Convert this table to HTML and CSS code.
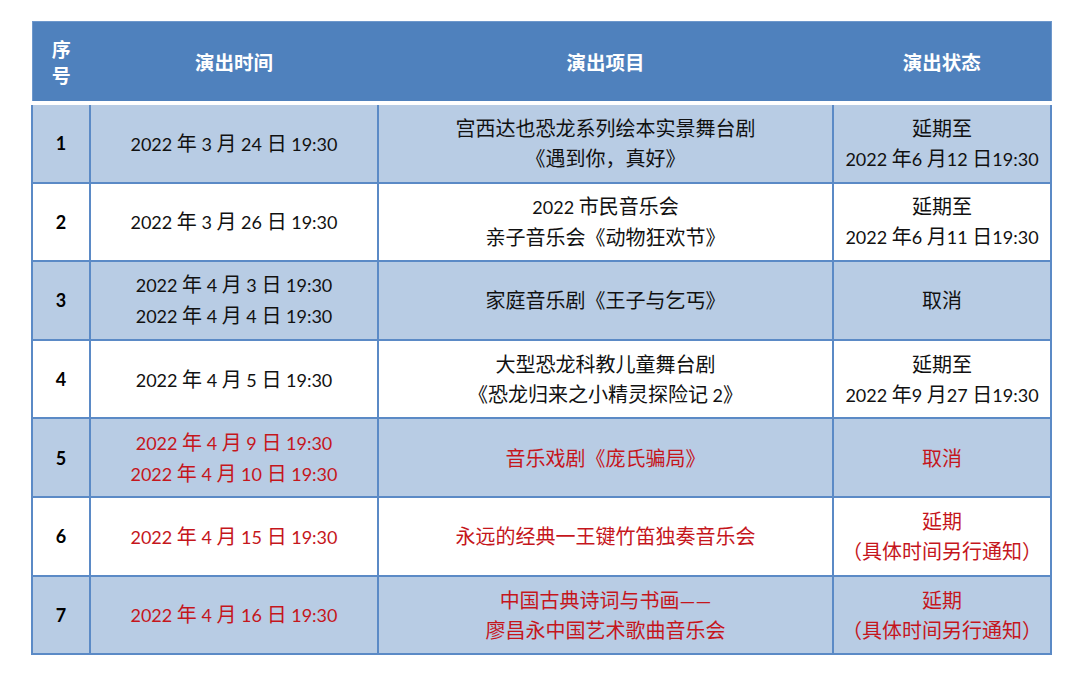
FILE: index.html
```html
<!DOCTYPE html>
<html lang="zh">
<head>
<meta charset="utf-8">
<link rel="stylesheet" href="styles.css">
</head>
<body>
<table class="sched">
  <colgroup>
    <col class="c-no">
    <col class="c-time">
    <col class="c-item">
    <col class="c-state">
  </colgroup>
  <thead>
    <tr class="head">
      <th class="hno">序<br>号</th>
      <th>演出时间</th>
      <th>演出项目</th>
      <th>演出状态</th>
    </tr>
  </thead>
  <tbody>
    <tr class="alt">
      <td class="no">1</td>
      <td><span class="n">2022 </span>年<span class="n"> 3 </span>月<span class="n"> 24 </span>日<span class="n"> 19:30</span></td>
      <td>宫西达也恐龙系列绘本实景舞台剧<br>《遇到你，真好》</td>
      <td>延期至<br><span class="n">2022 </span>年<span class="n">6 </span>月<span class="n">12 </span>日<span class="n">19:30</span></td>
    </tr>
    <tr>
      <td class="no">2</td>
      <td><span class="n">2022 </span>年<span class="n"> 3 </span>月<span class="n"> 26 </span>日<span class="n"> 19:30</span></td>
      <td><span class="n">2022 </span>市民音乐会<br>亲子音乐会《动物狂欢节》</td>
      <td>延期至<br><span class="n">2022 </span>年<span class="n">6 </span>月<span class="n">11 </span>日<span class="n">19:30</span></td>
    </tr>
    <tr class="alt">
      <td class="no">3</td>
      <td><span class="n">2022 </span>年<span class="n"> 4 </span>月<span class="n"> 3 </span>日<span class="n"> 19:30</span><br><span class="n">2022 </span>年<span class="n"> 4 </span>月<span class="n"> 4 </span>日<span class="n"> 19:30</span></td>
      <td>家庭音乐剧《王子与乞丐》</td>
      <td>取消</td>
    </tr>
    <tr>
      <td class="no">4</td>
      <td><span class="n">2022 </span>年<span class="n"> 4 </span>月<span class="n"> 5 </span>日<span class="n"> 19:30</span></td>
      <td>大型恐龙科教儿童舞台剧<br>《恐龙归来之小精灵探险记<span class="n"> 2</span>》</td>
      <td>延期至<br><span class="n">2022 </span>年<span class="n">9 </span>月<span class="n">27 </span>日<span class="n">19:30</span></td>
    </tr>
    <tr class="alt red">
      <td class="no">5</td>
      <td><span class="n">2022 </span>年<span class="n"> 4 </span>月<span class="n"> 9 </span>日<span class="n"> 19:30</span><br><span class="n">2022 </span>年<span class="n"> 4 </span>月<span class="n"> 10 </span>日<span class="n"> 19:30</span></td>
      <td>音乐戏剧《庞氏骗局》</td>
      <td>取消</td>
    </tr>
    <tr class="red">
      <td class="no">6</td>
      <td><span class="n">2022 </span>年<span class="n"> 4 </span>月<span class="n"> 15 </span>日<span class="n"> 19:30</span></td>
      <td>永远的经典一王键竹笛独奏音乐会</td>
      <td>延期<br>（具体时间另行通知）</td>
    </tr>
    <tr class="alt red">
      <td class="no">7</td>
      <td><span class="n">2022 </span>年<span class="n"> 4 </span>月<span class="n"> 16 </span>日<span class="n"> 19:30</span></td>
      <td>中国古典诗词与书画——<br>廖昌永中国艺术歌曲音乐会</td>
      <td>延期<br>（具体时间另行通知）</td>
    </tr>
  </tbody>
</table>
</body>
</html>
```

FILE: styles.css
```css
html, body {
  margin: 0;
  padding: 0;
  background: #ffffff;
}

body {
  padding: 21px 0 0 31px;
  font-family: Lato, "Noto Sans CJK SC", sans-serif;
}

.sched {
  border-collapse: collapse;
  table-layout: fixed;
  width: 1019px;
}

.c-no { width: 58px; }
.c-time { width: 288px; }
.c-item { width: 455px; }
.c-state { width: 218px; }

.head th {
  background: #4f81bd;
  color: #ffffff;
  font-family: "Noto Sans CJK SC", sans-serif;
  font-weight: 700;
  font-size: 19.5px;
  line-height: 26px;
  height: 79px;
  padding: 0;
  border-top: 1px solid #6e98cc;
  border-bottom: 4px solid #ffffff;
  text-align: center;
  vertical-align: middle;
}

.head th:first-child { border-left: 1px solid #6e98cc; }
.head th:last-child { border-right: 1px solid #6e98cc; }

.head .hno {
  font-size: 19px;
  line-height: 26px;
}

tbody td {
  border: 2px solid #5b8ac6;
  height: 76.6px;
  padding: 0;
  text-align: center;
  vertical-align: middle;
  font-size: 20px;
  line-height: 30px;
  color: #111111;
}

.n {
  font-size: 18px;
}

tbody tr.alt td {
  background: #b8cce4;
}

tbody tr.red td {
  color: #c5161c;
}

tbody td.no,
tbody tr.red td.no {
  font-weight: 700;
  color: #000000;
  font-size: 18px;
}
```
